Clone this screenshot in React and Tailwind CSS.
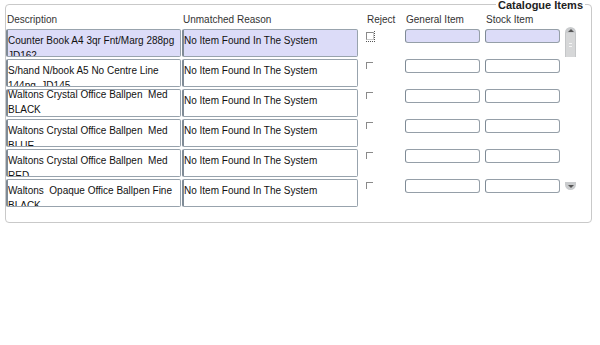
import React from "react";

const rows = [
  { desc: ["Counter Book A4 3qr Fnt/Marg 288pg", "JD162"], pad: "pt-[3px]", active: true },
  { desc: ["S/hand N/book A5 No Centre Line", "144pg  JD145"], pad: "pt-[3px]" },
  { desc: ["Waltons Crystal Office Ballpen  Med", "BLACK"], pad: "-mt-[3px]" },
  { desc: ["Waltons Crystal Office Ballpen  Med", "BLUE"], pad: "pt-[3px]" },
  { desc: ["Waltons Crystal Office Ballpen  Med", "RED"], pad: "pt-[3px]" },
  { desc: ["Waltons  Opaque Office Ballpen Fine", "BLACK"], pad: "pt-[3px]" },
];

const Row = ({ row }) => {
  const bg = row.active ? "bg-[#dcdcf8]" : "bg-white";
  return (
    <div className="flex items-start h-[30px]">
      {/* Description */}
      <div className={`w-[175px] h-[28px] overflow-hidden rounded-[2px] border border-[#98a3ad] border-l-2 border-l-[#7f8b96] ${bg}`}>
        <div className={`leading-[15px] whitespace-pre ${row.pad}`}>
          <div>{row.desc[0]}</div>
          <div>{row.desc[1]}</div>
        </div>
      </div>
      {/* Unmatched Reason */}
      <div className={`ml-[1px] w-[176px] h-[28px] overflow-hidden rounded-[2px] border border-[#98a3ad] border-l-2 border-l-[#7f8b96] ${bg}`}>
        <div className="leading-[15px] pt-[3px]">No Item Found In The System</div>
      </div>
      {/* Reject */}
      <div className="w-[47px] pl-[8px] pt-[2px]">
        {row.active ? (
          <div className="w-[9px] h-[11px] border-b border-r border-dotted border-[#555] pt-[1px]">
            <div className="w-[8px] h-[8px] border border-[#8a8a8a] border-r-[#c8c8c8] border-b-[#c8c8c8]" />
          </div>
        ) : (
          <div className="mt-[1px] w-[7px] h-[7px] border-t border-l border-[#8a8a8a]" />
        )}
      </div>
      {/* General Item */}
      <div className={`w-[75px] h-[14px] rounded-[3px] border border-[#959fa8] border-l-[#7f8b96] ${bg}`} />
      {/* Stock Item */}
      <div className={`ml-[5px] w-[75px] h-[14px] rounded-[3px] border border-[#959fa8] border-l-[#7f8b96] ${bg}`} />
    </div>
  );
};

export default function App() {
  return (
    <div
      className="w-[600px] h-[345px] bg-white text-[10px] text-[#111]"
      style={{ fontFamily: '"Liberation Sans", Arial, sans-serif' }}
    >
      <div className="pt-[4px] pl-[5px]">
        <div className="relative w-[587px] h-[219px] rounded-[4px] border border-[#c9c9c9]">
          {/* legend */}
          <div className="absolute top-[-6px] right-[6px] px-[2px] bg-white text-[11px] leading-[12px] font-bold text-[#222]">
            Catalogue Items
          </div>

          {/* header */}
          <div className="flex pt-[9px] h-[21px] leading-[12px] text-[#333]">
            <div className="w-[176px] pl-[1px]">Description</div>
            <div className="w-[185px] pl-[1px]">Unmatched Reason</div>
            <div className="w-[39px]">Reject</div>
            <div className="w-[80px]">General Item</div>
            <div>Stock Item</div>
          </div>

          {/* rows + scrollbar */}
          <div className="flex mt-[3px]">
            <div className="flex flex-col">
              {rows.map((r, i) => (
                <Row key={i} row={r} />
              ))}
            </div>
            <div className="ml-[5px] -mt-[2px] h-[163px] w-[11px] flex flex-col">
              <div className="h-[6px] rounded-t-full bg-[#c9cbcd] flex items-center justify-center">
                <div className="w-0 h-0 border-l-[3px] border-r-[3px] border-b-[3px] border-l-transparent border-r-transparent border-b-[#555]" />
              </div>
              <div className="h-[24px] bg-[#d6d7d8] border-x border-[#c4c6c8] flex flex-col items-center justify-center gap-[2px]">
                <div className="w-[3px] h-[1px] bg-[#f4f4f4]" />
                <div className="w-[3px] h-[1px] bg-[#f4f4f4]" />
              </div>
              <div className="flex-1" />
              <div className="h-[8px] rounded-b-full bg-[#c9cbcd] flex items-center justify-center">
                <div className="w-0 h-0 border-l-[3px] border-r-[3px] border-t-[3px] border-l-transparent border-r-transparent border-t-[#555]" />
              </div>
            </div>
          </div>
        </div>
      </div>
    </div>
  );
}
